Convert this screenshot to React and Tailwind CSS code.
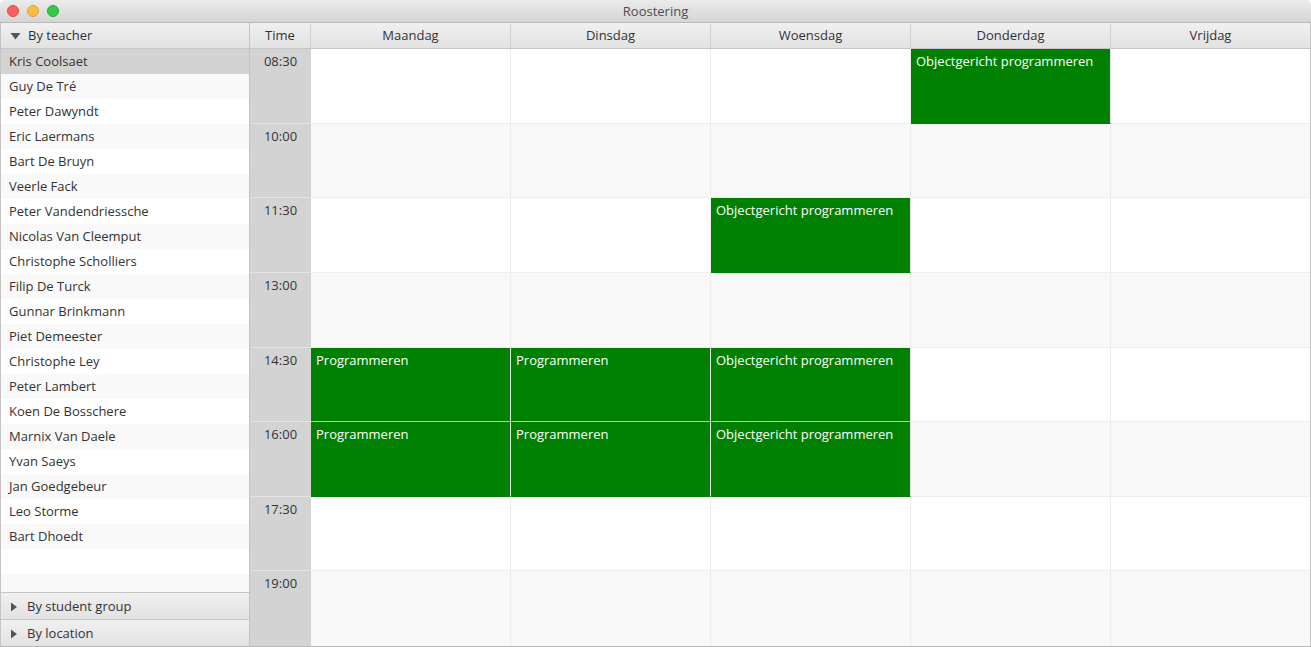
import React from "react";

const teachers = [
  "Kris Coolsaet","Guy De Tré","Peter Dawyndt","Eric Laermans","Bart De Bruyn","Veerle Fack",
  "Peter Vandendriessche","Nicolas Van Cleemput","Christophe Scholliers","Filip De Turck",
  "Gunnar Brinkmann","Piet Demeester","Christophe Ley","Peter Lambert","Koen De Bosschere",
  "Marnix Van Daele","Yvan Saeys","Jan Goedgebeur","Leo Storme","Bart Dhoedt",
];
const days = ["Maandag","Dinsdag","Woensdag","Donderdag","Vrijdag"];
const times = ["08:30","10:00","11:30","13:00","14:30","16:00","17:30","19:00"];
const events = {
  "0-3": "Objectgericht programmeren",
  "2-2": "Objectgericht programmeren",
  "4-0": "Programmeren",
  "4-1": "Programmeren",
  "4-2": "Objectgericht programmeren",
  "5-0": "Programmeren",
  "5-1": "Programmeren",
  "5-2": "Objectgericht programmeren",
};

function DownTri() {
  return (
    <svg width="11" height="8" viewBox="0 0 11 8" className="shrink-0">
      <path d="M0.5 1 L10.5 1 L5.5 7.5 Z" fill="#555" />
    </svg>
  );
}
function RightTri() {
  return (
    <svg width="8" height="10" viewBox="0 0 8 10" className="shrink-0">
      <path d="M1 0.5 L7 5 L1 9.5 Z" fill="#555" />
    </svg>
  );
}

export default function App() {
  return (
    <div
      className="w-[1311px] h-[647px] flex flex-col bg-white overflow-hidden text-[13px] text-[#333]"
      style={{ fontFamily: '"Open Sans", "Liberation Sans", sans-serif' }}
    >
      {/* title bar */}
      <div className="relative h-[23px] shrink-0 flex items-center justify-center bg-gradient-to-b from-[#ebebeb] to-[#d5d5d5] border-b border-[#b9b9b9] rounded-t-[5px]">
        <div className="absolute left-[7px] top-[5px] flex gap-[8px]">
          <span className="w-[12px] h-[12px] rounded-full bg-[#fc605c] border border-[#de4a45]" />
          <span className="w-[12px] h-[12px] rounded-full bg-[#fdbc40] border border-[#dea236]" />
          <span className="w-[12px] h-[12px] rounded-full bg-[#34c84a] border border-[#27aa35]" />
        </div>
        <span className="text-[13px] text-[#4d4d4d] leading-none">Roostering</span>
      </div>

      <div className="flex flex-1 min-h-0 border-b border-[#b8b8b8]">
        {/* left panel */}
        <div className="w-[250px] shrink-0 flex flex-col border-r border-l border-[#c4c4c4]">
          <div className="h-[26px] shrink-0 flex items-center gap-[7px] pl-[9px] bg-gradient-to-b from-[#f0f0f0] to-[#e2e2e2] border-b border-[#c6c6c6]">
            <DownTri />
            <span>By teacher</span>
          </div>
          <div className="flex-1 min-h-0 overflow-hidden flex flex-col">
            {teachers.map((t, i) => (
              <div
                key={t}
                className={
                  "h-[25px] shrink-0 flex items-center pl-[8px] " +
                  (i === 0 ? "bg-[#d3d3d3]" : i % 2 === 1 ? "bg-[#f9f9f9]" : "bg-white")
                }
              >
                {t}
              </div>
            ))}
            <div className="h-[25px] shrink-0 bg-white" />
            <div className="h-[25px] shrink-0 bg-[#f9f9f9]" />
          </div>
          <div className="h-[27px] shrink-0 flex items-center gap-[9px] pl-[9px] pt-[2px] bg-gradient-to-b from-[#f0f0f0] to-[#e2e2e2] border-t border-[#c6c6c6]">
            <RightTri />
            <span>By student group</span>
          </div>
          <div className="h-[27px] shrink-0 flex items-center gap-[9px] pl-[9px] pt-[2px] bg-gradient-to-b from-[#f0f0f0] to-[#e2e2e2] border-t border-[#c6c6c6]">
            <RightTri />
            <span>By location</span>
          </div>
        </div>

        {/* schedule */}
        <div className="flex-1 flex flex-col min-w-0 border-r border-[#c4c4c4]">
          <div className="h-[26px] shrink-0 flex pt-[1px] bg-gradient-to-b from-[#f0f0f0] to-[#e2e2e2] border-b border-[#c6c6c6]">
            <div className="w-[61px] shrink-0 flex items-center justify-center border-r border-[#d0d0d0]">Time</div>
            {days.map((d, i) => (
              <div
                key={d}
                className={
                  "flex items-center justify-center " +
                  (i < 4 ? "w-[200px] shrink-0 border-r border-[#d0d0d0]" : "flex-1")
                }
              >
                {d}
              </div>
            ))}
          </div>
          <div className="flex-1 min-h-0 flex flex-col">
            {times.map((t, r) => (
              <div key={t} className="flex-1 min-h-0 flex">
                <div
                  className={
                    "w-[61px] shrink-0 bg-[#d3d3d3] flex justify-center pt-[3px] " +
                    (r < 7 ? "border-b border-[#e4e4e4]" : "")
                  }
                >
                  {t}
                </div>
                {days.map((d, c) => {
                  const ev = events[`${r}-${c}`];
                  const below = events[`${r + 1}-${c}`];
                  const base = c < 4 ? "w-[200px] shrink-0 border-r " : "flex-1 ";
                  if (ev) {
                    return (
                      <div
                        key={d}
                        className={
                          base +
                          "border-r-[#e6e6e6] bg-[#008000] text-white pl-[5px] pt-[3px] " +
                          (below ? "border-b border-b-[#a6d3a6]" : "border-b border-b-[#008000]")
                        }
                      >
                        {ev}
                      </div>
                    );
                  }
                  return (
                    <div
                      key={d}
                      className={
                        base +
                        "border-r-[#ececec] " +
                        (r % 2 === 0 ? "bg-white " : "bg-[#f8f8f8] ") +
                        (r < 7 ? "border-b border-b-[#eeeeee]" : "")
                      }
                    />
                  );
                })}
              </div>
            ))}
          </div>
        </div>
      </div>
    </div>
  );
}
